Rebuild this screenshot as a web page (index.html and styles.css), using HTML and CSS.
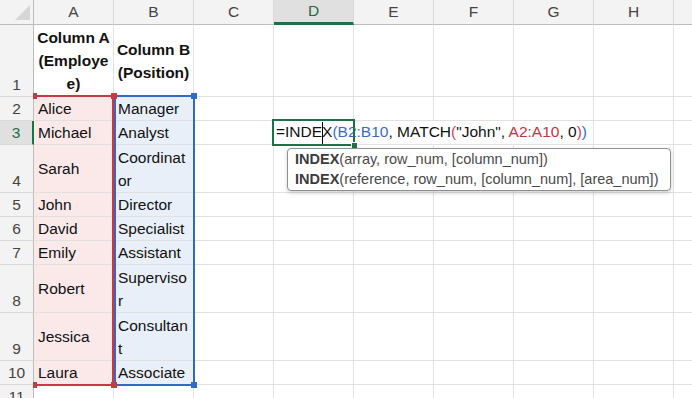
FILE: index.html
```html
<!DOCTYPE html>
<html lang="en">

<head>
    <meta charset="UTF-8">
    <meta name="viewport" content="width=device-width, initial-scale=1.0">
    <title>Sheet1 - INDEX / MATCH</title>
    <link rel="stylesheet" href="styles.css">
</head>

<body>
    <main class="page">
        <section class="sheet">
            <!-- column headers -->
            <div class="cell corner">
                <svg width="33" height="24" viewBox="0 0 33 24"><polygon points="15,20 30,20 30,5" fill="#d6d6d6"/></svg>
            </div>
            <div class="cell ch">A</div>
            <div class="cell ch">B</div>
            <div class="cell ch">C</div>
            <div class="cell ch sel">D</div>
            <div class="cell ch">E</div>
            <div class="cell ch">F</div>
            <div class="cell ch">G</div>
            <div class="cell ch">H</div>
            <div class="cell ch">I</div>

            <!-- row 1 -->
            <div class="cell rh">1</div>
            <div class="cell c hd">Column A (Employee)</div>
            <div class="cell c hd">Column B (Position)</div>
            <div class="cell c"></div><div class="cell c"></div><div class="cell c"></div><div class="cell c"></div><div class="cell c"></div><div class="cell c"></div><div class="cell c"></div>

            <!-- row 2 -->
            <div class="cell rh">2</div>
            <div class="cell c ra">Alice</div>
            <div class="cell c rb">Manager</div>
            <div class="cell c"></div><div class="cell c"></div><div class="cell c"></div><div class="cell c"></div><div class="cell c"></div><div class="cell c"></div><div class="cell c"></div>

            <!-- row 3 -->
            <div class="cell rh sel">3</div>
            <div class="cell c ra">Michael</div>
            <div class="cell c rb">Analyst</div>
            <div class="cell c"></div>
            <div class="cell c formula spill">
                <span class="f">=INDE<span class="caret"></span>X<span class="p-blue">(</span><span class="ref-b">B2:B10</span>, MATCH<span class="p-red">(</span>"John", <span class="ref-a">A2:A10</span>, 0<span class="p-red">)</span><span class="p-blue">)</span></span>
            </div>
            <div class="cell c spill"></div>
            <div class="cell c spill"></div>
            <div class="cell c"></div><div class="cell c"></div><div class="cell c"></div>

            <!-- row 4 -->
            <div class="cell rh">4</div>
            <div class="cell c ra">Sarah</div>
            <div class="cell c rb">Coordinator</div>
            <div class="cell c"></div><div class="cell c"></div><div class="cell c"></div><div class="cell c"></div><div class="cell c"></div><div class="cell c"></div><div class="cell c"></div>

            <!-- row 5 -->
            <div class="cell rh">5</div>
            <div class="cell c ra">John</div>
            <div class="cell c rb">Director</div>
            <div class="cell c"></div><div class="cell c"></div><div class="cell c"></div><div class="cell c"></div><div class="cell c"></div><div class="cell c"></div><div class="cell c"></div>

            <!-- row 6 -->
            <div class="cell rh">6</div>
            <div class="cell c ra">David</div>
            <div class="cell c rb">Specialist</div>
            <div class="cell c"></div><div class="cell c"></div><div class="cell c"></div><div class="cell c"></div><div class="cell c"></div><div class="cell c"></div><div class="cell c"></div>

            <!-- row 7 -->
            <div class="cell rh">7</div>
            <div class="cell c ra">Emily</div>
            <div class="cell c rb">Assistant</div>
            <div class="cell c"></div><div class="cell c"></div><div class="cell c"></div><div class="cell c"></div><div class="cell c"></div><div class="cell c"></div><div class="cell c"></div>

            <!-- row 8 -->
            <div class="cell rh">8</div>
            <div class="cell c ra">Robert</div>
            <div class="cell c rb">Supervisor</div>
            <div class="cell c"></div><div class="cell c"></div><div class="cell c"></div><div class="cell c"></div><div class="cell c"></div><div class="cell c"></div><div class="cell c"></div>

            <!-- row 9 -->
            <div class="cell rh">9</div>
            <div class="cell c ra">Jessica</div>
            <div class="cell c rb">Consultant</div>
            <div class="cell c"></div><div class="cell c"></div><div class="cell c"></div><div class="cell c"></div><div class="cell c"></div><div class="cell c"></div><div class="cell c"></div>

            <!-- row 10 -->
            <div class="cell rh">10</div>
            <div class="cell c ra">Laura</div>
            <div class="cell c rb">Associate</div>
            <div class="cell c"></div><div class="cell c"></div><div class="cell c"></div><div class="cell c"></div><div class="cell c"></div><div class="cell c"></div><div class="cell c"></div>

            <!-- row 11 -->
            <div class="cell rh">11</div>
            <div class="cell c"></div><div class="cell c"></div><div class="cell c"></div><div class="cell c"></div><div class="cell c"></div><div class="cell c"></div><div class="cell c"></div><div class="cell c"></div><div class="cell c"></div>
        </section>

        <!-- range highlights drawn over the grid -->
        <div class="range range-a"></div>
        <div class="range range-b"></div>
        <div class="handle h-red h-a-tl"></div>
        <div class="handle h-red h-a-bl"></div>
        <div class="handle h-blue h-b-tr"></div>
        <div class="handle h-blue h-b-br"></div>
        <div class="handle h-red h-a-tr"></div>
        <div class="handle h-red h-a-br"></div>

        <div class="active-cell"></div>
        <div class="fill-handle"></div>

        <div class="tip">
            <div><b>INDEX</b>(array, row_num, [column_num])</div>
            <div><b>INDEX</b>(reference, row_num, [column_num], [area_num])</div>
        </div>
    </main>
</body>

</html>
```

FILE: styles.css
```css
:root {
    --grid-line: #e1e1e1;
    --head-bg: #f3f3f3;
    --head-line: #d9d9d9;
    --head-edge: #bdbdbd;
    --green: #1e7145;
    --red: #c53a44;
    --blue: #3169c6;
}

body {
    margin: 0;
    width: 692px;
    height: 398px;
    overflow: hidden;
    background: #fff;
    font-family: "Liberation Sans", Arial, sans-serif;
    font-size: 15.5px;
    color: #111;
}

.page {
    position: relative;
    width: 692px;
    height: 398px;
    overflow: hidden;
}

.sheet {
    display: grid;
    grid-template-columns: 34px repeat(9, 80px);
    grid-template-rows: 25px 72px 24px 24px 48px 24px 24px 24px 48px 48px 24px 24px;
}

.cell {
    box-sizing: border-box;
    border-right: 1px solid var(--grid-line);
    border-bottom: 1px solid var(--grid-line);
}

/* headers */
.corner {
    background: var(--head-bg);
    border-right-color: var(--head-edge);
    border-bottom-color: var(--head-edge);
}

.corner svg {
    display: block;
}

.ch {
    display: flex;
    align-items: center;
    justify-content: center;
    background: var(--head-bg);
    color: #444;
    border-right-color: var(--head-line);
    border-bottom-color: var(--head-edge);
}

.rh {
    display: flex;
    align-items: flex-end;
    justify-content: center;
    line-height: 23px;
    background: var(--head-bg);
    color: #444;
    border-right-color: var(--head-edge);
    border-bottom-color: var(--head-line);
}

.ch.sel {
    background: #e0e0e0;
    color: #1d6b45;
    border-bottom: 3px solid var(--green);
}

.rh.sel {
    background: #e0e0e0;
    color: #1d6b45;
    border-right: 2px solid var(--green);
}

/* cells */
.c {
    display: flex;
    align-items: center;
    padding: 0 3px 0 4px;
    line-height: 23px;
    overflow-wrap: anywhere;
}

.hd {
    justify-content: center;
    text-align: center;
    font-weight: bold;
    padding: 0 2px;
}

.ra {
    background: #fbe9ea;
}

.rb {
    background: #e9eff9;
}

.spill {
    border-right-color: transparent;
}

.formula {
    padding-left: 2px;
    overflow: visible;
}

.f {
    white-space: nowrap;
}

.caret {
    display: inline-block;
    width: 0;
    height: 23px;
    margin-right: -1px;
    border-left: 1px solid #000;
    vertical-align: middle;
}

.ref-b,
.p-blue {
    color: #3a6bc9;
}

.ref-a {
    color: #c8323e;
}

.p-red {
    color: #d43c62;
}

/* overlays */
.range {
    position: absolute;
    top: 95px;
    height: 291px;
    box-sizing: border-box;
    border: 2px solid;
}

.range-a {
    left: 34px;
    width: 80px;
    border-color: var(--red);
    border-left: none;
}

.range-b {
    left: 114px;
    width: 81px;
    border-color: var(--blue);
}

.handle {
    position: absolute;
    width: 6px;
    height: 6px;
}

.h-red {
    background: var(--red);
}

.h-blue {
    background: var(--blue);
}

.h-a-tl { left: 33px; top: 93px; width: 4px; }
.h-a-bl { left: 33px; top: 382px; width: 4px; }
.h-a-tr { left: 111px; top: 93px; }
.h-a-br { left: 111px; top: 382px; }
.h-b-tr { left: 191px; top: 93px; }
.h-b-br { left: 191px; top: 382px; }

.active-cell {
    position: absolute;
    left: 272px;
    top: 119px;
    width: 83px;
    height: 27px;
    box-sizing: border-box;
    border: 2px solid var(--green);
}

.fill-handle {
    position: absolute;
    left: 351px;
    top: 142px;
    width: 5px;
    height: 5px;
    background: var(--green);
    border: 1px solid #fff;
}

.tip {
    position: absolute;
    left: 287px;
    top: 148px;
    width: 384px;
    height: 43px;
    box-sizing: border-box;
    padding: 0 6px 0 7px;
    background: #fff;
    border: 1px solid #8f8f8f;
    border-radius: 4px;
    box-shadow: 0 2px 4px rgba(0, 0, 0, 0.18);
    font-size: 14.5px;
    line-height: 20px;
    color: #4a4a4a;
    white-space: nowrap;
}

.tip b {
    color: #3c3c3c;
}
```
